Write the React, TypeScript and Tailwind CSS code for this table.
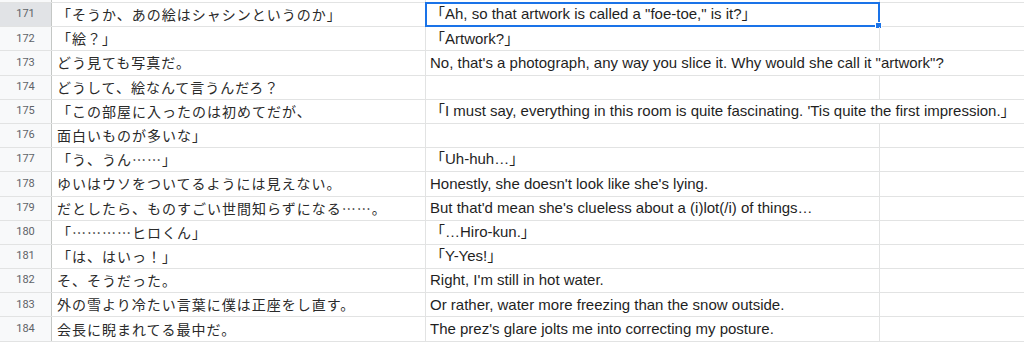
import React from "react";

type Row = {
  num: number;
  ja: string;
  en: string;
  overflow?: boolean;
};

const rows: Row[] = [
  { num: 171, ja: "「そうか、あの絵はシャシンというのか」", en: "「Ah, so that artwork is called a \"foe-toe,\" is it?」" },
  { num: 172, ja: "「絵？」", en: "「Artwork?」" },
  {
    num: 173,
    ja: "どう見ても写真だ。",
    en: "No, that's a photograph, any way you slice it. Why would she call it \"artwork\"?",
    overflow: true,
  },
  { num: 174, ja: "どうして、絵なんて言うんだろ？", en: "" },
  {
    num: 175,
    ja: "「この部屋に入ったのは初めてだが、",
    en: "「I must say, everything in this room is quite fascinating. 'Tis quite the first impression.」",
    overflow: true,
  },
  { num: 176, ja: "面白いものが多いな」", en: "" },
  { num: 177, ja: "「う、うん……」", en: "「Uh-huh…」" },
  { num: 178, ja: "ゆいはウソをついてるようには見えない。", en: "Honestly, she doesn't look like she's lying." },
  { num: 179, ja: "だとしたら、ものすごい世間知らずになる……。", en: "But that'd mean she's clueless about a (i)lot(/i) of things…" },
  { num: 180, ja: "「…………ヒロくん」", en: "「…Hiro-kun.」" },
  { num: 181, ja: "「は、はいっ！」", en: "「Y-Yes!」" },
  { num: 182, ja: "そ、そうだった。", en: "Right, I'm still in hot water." },
  { num: 183, ja: "外の雪より冷たい言葉に僕は正座をし直す。", en: "Or rather, water more freezing than the snow outside." },
  { num: 184, ja: "会長に睨まれてる最中だ。", en: "The prez's glare jolts me into correcting my posture." },
];

const SheetRow: React.FC<{ row: Row; selected: boolean }> = ({ row, selected }) => {
  return (
    <div className="flex h-[24.2px] border-b border-[#e2e3e3]">
      <div
        className={`w-[52px] shrink-0 flex items-center justify-center border-r border-[#c4c7c5] text-[11px] text-[#5f6368] font-['Roboto',sans-serif] ${
          selected ? "bg-[#e1e3e6]" : "bg-[#f8f9fa]"
        }`}
      >
        {row.num}
      </div>
      <div className="w-[374px] shrink-0 flex items-center pl-[5px] border-r border-[#e2e3e3] whitespace-nowrap overflow-hidden text-[14px] tracking-[1px] text-[#2a2a2a] font-['Noto_Sans_CJK_JP',sans-serif]">
        {row.ja}
      </div>
      <div
        className={`relative w-[454px] shrink-0 flex items-center pl-[4px] whitespace-nowrap text-[15px] text-[#1f1f1f] font-['Liberation_Sans','Noto_Sans_CJK_JP',sans-serif] ${
          row.overflow ? "border-r border-transparent z-10" : "border-r border-[#e2e3e3]"
        }`}
      >
        <span>{row.en}</span>
        {selected && (
          <div className="absolute -left-px -top-px -right-px -bottom-px border-2 border-[#1a73e8]">
            <div className="absolute -right-[4px] -bottom-[4px] w-[7px] h-[7px] bg-[#1a73e8] border border-white" />
          </div>
        )}
      </div>
      <div className="flex-1" />
    </div>
  );
};

export default function App() {
  return (
    <div className="w-[1024px] h-[342px] overflow-hidden bg-white">
      <div className="flex h-[3px] border-b border-[#e2e3e3]">
        <div className="w-[52px] shrink-0 bg-[#f8f9fa] border-r border-[#c4c7c5]" />
        <div className="w-[374px] shrink-0 border-r border-[#e2e3e3]" />
        <div className="w-[454px] shrink-0 border-r border-[#e2e3e3]" />
      </div>
      {rows.map((row) => (
        <SheetRow key={row.num} row={row} selected={row.num === 171} />
      ))}
    </div>
  );
}
